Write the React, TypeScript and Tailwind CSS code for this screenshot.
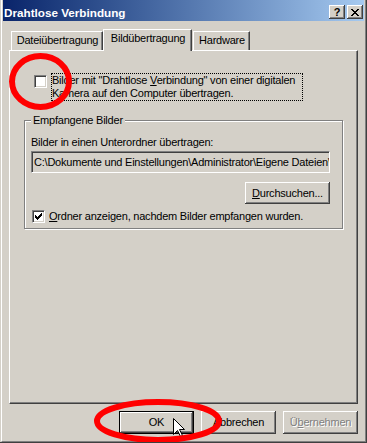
import React from "react";

const raised =
  "shadow-[inset_-1px_-1px_#404040,inset_1px_1px_#fff,inset_-2px_-2px_#808080]";

function Check({ checked }: { checked?: boolean }) {
  return (
    <div className="flex h-[13px] w-[13px] shrink-0 items-center justify-center border border-b-white border-l-[#808080] border-r-white border-t-[#808080] bg-white shadow-[inset_1px_1px_#404040,inset_-1px_-1px_#D4D0C8]">
      {checked && (
        <svg width="7" height="7" viewBox="0 0 7 7">
          <path
            d="M0 2h1v3H0zM1 3h1v3H1zM2 4h1v3H2zM3 3h1v3H3zM4 2h1v3H4zM5 1h1v3H5zM6 0h1v3H6z"
            fill="#000"
          />
        </svg>
      )}
    </div>
  );
}

function Button({
  children,
  isDefault,
  disabled,
}: {
  children: React.ReactNode;
  isDefault?: boolean;
  disabled?: boolean;
}) {
  return (
    <div
      className={
        "flex h-[23px] w-[75px] items-center justify-center bg-[#D4D0C8] " +
        raised +
        (isDefault ? " border border-black" : "") +
        (disabled ? " text-[#808080] [text-shadow:1px_1px_0_#fff]" : "")
      }
    >
      {children}
    </div>
  );
}

function Tab({
  label,
  width,
  active,
  className = "",
}: {
  label: string;
  width: string;
  active?: boolean;
  className?: string;
}) {
  return (
    <div
      className={
        "flex justify-center border-l border-t border-r border-l-white border-t-white border-r-[#404040] bg-[#D4D0C8] pt-[2px] shadow-[inset_-1px_0_#808080] " +
        width +
        " " +
        (active ? "relative z-10 mb-[-1px] h-[22px]" : "h-[19px]") +
        " " +
        className
      }
    >
      <span className="pl-px">{label}</span>
    </div>
  );
}

export default function App() {
  return (
    <div className="relative h-[443px] w-[367px] overflow-hidden border-b border-r border-b-[#404040] border-r-[#404040] bg-[#D4D0C8] pl-px font-['Liberation_Sans',Arial,sans-serif] text-[11px] leading-[13px] tracking-[-0.22px] text-black">
      <div className="flex h-full flex-col border-b border-l border-r border-b-[#808080] border-l-white border-r-[#808080] px-px">
        {/* title bar */}
        <div className="flex h-[21px] shrink-0 items-center bg-gradient-to-r from-[#0A246A] to-[#A6CAF0] pt-[3px]">
          <span className="pl-px text-[11.7px] font-bold tracking-normal text-white">
            Drahtlose Verbindung
          </span>
          <div className="ml-auto mr-px flex gap-[2px]">
            <div
              className={
                "flex h-[14px] w-[16px] items-center justify-center bg-[#D4D0C8] text-[11px] font-bold leading-none " +
                raised
              }
            >
              ?
            </div>
            <div
              className={
                "flex h-[14px] w-[16px] items-center justify-center bg-[#D4D0C8] " +
                raised
              }
            >
              <svg width="8" height="7" viewBox="0 0 8 7">
                <path
                  d="M0 0h2v1H0zM6 0h2v1H6zM1 1h2v1H1zM5 1h2v1H5zM2 2h4v1H2zM3 3h2v1H3zM2 4h4v1H2zM1 5h2v1H1zM5 5h2v1H5zM0 6h2v1H0zM6 6h2v1H6z"
                  fill="#000"
                />
              </svg>
            </div>
          </div>
        </div>

        {/* body */}
        <div className="flex flex-1 flex-col px-[6px] pt-[8px]">
          <div className="flex h-[21px] items-end pl-[2px]">
            <Tab label="Dateiübertragung" width="w-[92px]" />
            <Tab label="Bildübertragung" width="w-[89px]" active />
            <Tab label="Hardware" width="w-[57px]" className="ml-px" />
          </div>

          <div className="flex h-[354px] flex-col border border-b-[#404040] border-l-white border-r-[#404040] border-t-white shadow-[inset_-1px_-1px_#808080]">
            <div className="ml-[24px] mt-[22px] flex items-start gap-[4px]">
              <div className="mt-[2px]">
                <Check />
              </div>
              <div className="w-[252px] whitespace-nowrap border border-dotted border-black">
                Bilder mit "Drahtlose <span className="underline">V</span>
                erbindung" von einer digitalen
                <br />
                Kamera auf den Computer übertragen.
              </div>
            </div>

            <div className="relative ml-[14px] mt-[19px] flex w-[319px] flex-col border border-[#808080] pb-[5px] pl-[6px] pr-[12px] pt-[15px] shadow-[inset_1px_1px_#fff,1px_1px_#fff]">
              <span className="absolute left-[6px] top-[-7px] bg-[#D4D0C8] px-[2px]">
                Empfangene Bilder
              </span>
              <div>Bilder in einen Unterordner übertragen:</div>
              <div className="mt-[2px] flex h-[22px] items-center overflow-hidden whitespace-nowrap border border-b-white border-l-[#808080] border-r-white border-t-[#808080] pl-[2px] shadow-[inset_1px_1px_#404040,inset_-1px_-1px_#D4D0C8]">
                C:\Dokumente und Einstellungen\Administrator\Eigene Dateien\Eigene Bilder
              </div>
              <div className="mt-[9px] flex justify-end">
                <div
                  className={
                    "flex h-[22px] w-[85px] items-center justify-center bg-[#D4D0C8] " +
                    raised
                  }
                >
                  <span>
                    <span className="underline">D</span>urchsuchen...
                  </span>
                </div>
              </div>
              <div className="ml-px mt-[6px] flex items-center gap-[4px]">
                <Check checked />
                <span>
                  <span className="underline">O</span>rdner anzeigen, nachdem
                  Bilder empfangen wurden.
                </span>
              </div>
            </div>
          </div>

          <div className="mt-[7px] flex justify-end gap-[7px]">
            <Button isDefault>OK</Button>
            <Button>Abbrechen</Button>
            <Button disabled>
              <span>
                Ü<span className="underline">b</span>ernehmen
              </span>
            </Button>
          </div>
        </div>
      </div>

      {/* annotation overlay */}
      <svg
        className="pointer-events-none absolute left-0 top-0"
        width="367"
        height="443"
        viewBox="0 0 367 443"
      >
        <path
          d="M173.5 418.5v16l4-4 3 6 2-1-3-6h5z"
          fill="#fff"
          stroke="#000"
          strokeWidth="1"
        />
        <ellipse cx="40.5" cy="81.5" rx="28.5" ry="25.5" fill="none" stroke="#FF0000" strokeWidth="6" />
        <ellipse cx="158" cy="421" rx="61" ry="19" fill="none" stroke="#FF0000" strokeWidth="6" />
      </svg>
    </div>
  );
}
